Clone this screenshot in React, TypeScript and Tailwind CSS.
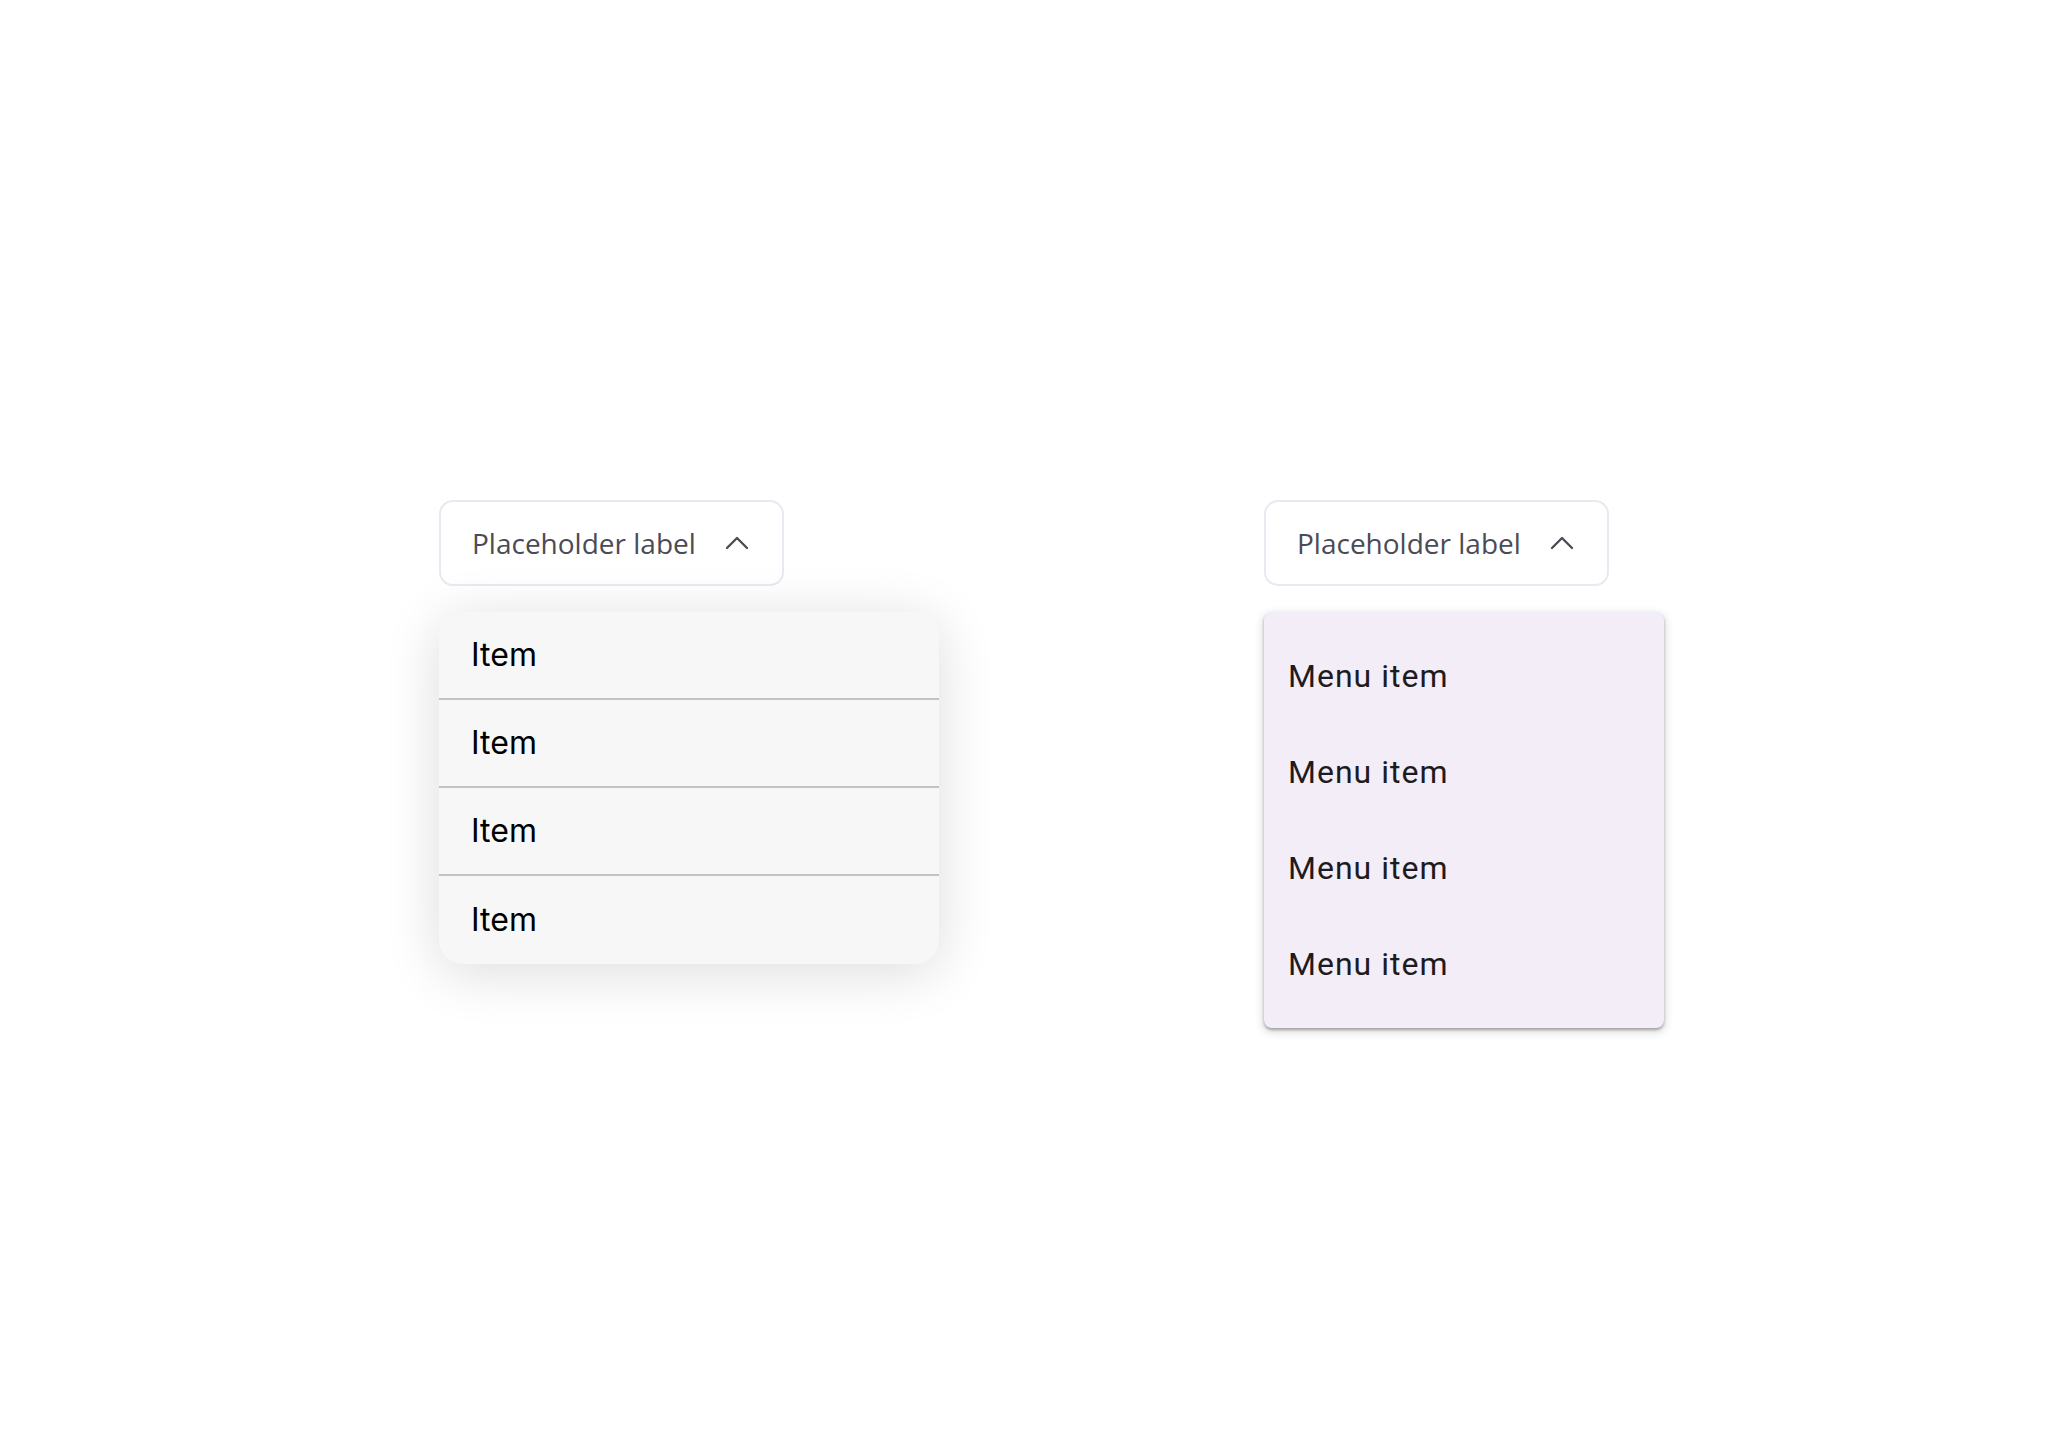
import { ChevronUp } from "lucide-react";

const items = ["Item", "Item", "Item", "Item"];
const menuItems = ["Menu item", "Menu item", "Menu item", "Menu item"];

const SelectButton = () => (
  <button className="flex h-[86px] w-[345px] items-center justify-between rounded-[14px] border-2 border-[#e8e9f1] bg-white pl-[31px] pr-[25px] font-['Open_Sans',sans-serif] text-[28px] text-[#4b4b55]">
    <span>Placeholder label</span>
    <ChevronUp className="h-[40px] w-[40px]" strokeWidth={1.4} />
  </button>
);

const App = () => {
  return (
    <div className="min-h-screen w-full bg-white">
      <div className="flex gap-[325px] pl-[439px] pt-[500px]">
        {/* card style list */}
        <div className="flex w-[500px] flex-col gap-[26px]">
          <SelectButton />
          <div className="overflow-hidden rounded-[24px] bg-[#f7f7f7] shadow-[0_8px_56px_rgba(0,0,0,0.14)]">
            {items.map((label, i) => (
              <div
                key={i}
                className={
                  "flex h-[88px] items-center px-[32px] font-['Inter',sans-serif] text-[32px] text-black " +
                  (i < items.length - 1 ? "border-b-2 border-[#c2c2c2]" : "")
                }
              >
                {label}
              </div>
            ))}
          </div>
        </div>

        {/* material menu */}
        <div className="flex w-[400px] flex-col gap-[26px]">
          <SelectButton />
          <div className="rounded-[8px] bg-[#f3edf7] py-[16px] shadow-[0_2px_3px_rgba(0,0,0,0.3),0_3px_8px_2px_rgba(0,0,0,0.12)]">
            {menuItems.map((label, i) => (
              <div
                key={i}
                className="flex h-[96px] items-center px-[24px] font-['Roboto',sans-serif] text-[32px] tracking-[1px] text-[#1d1b20]"
              >
                {label}
              </div>
            ))}
          </div>
        </div>
      </div>
    </div>
  );
};

export default App;
